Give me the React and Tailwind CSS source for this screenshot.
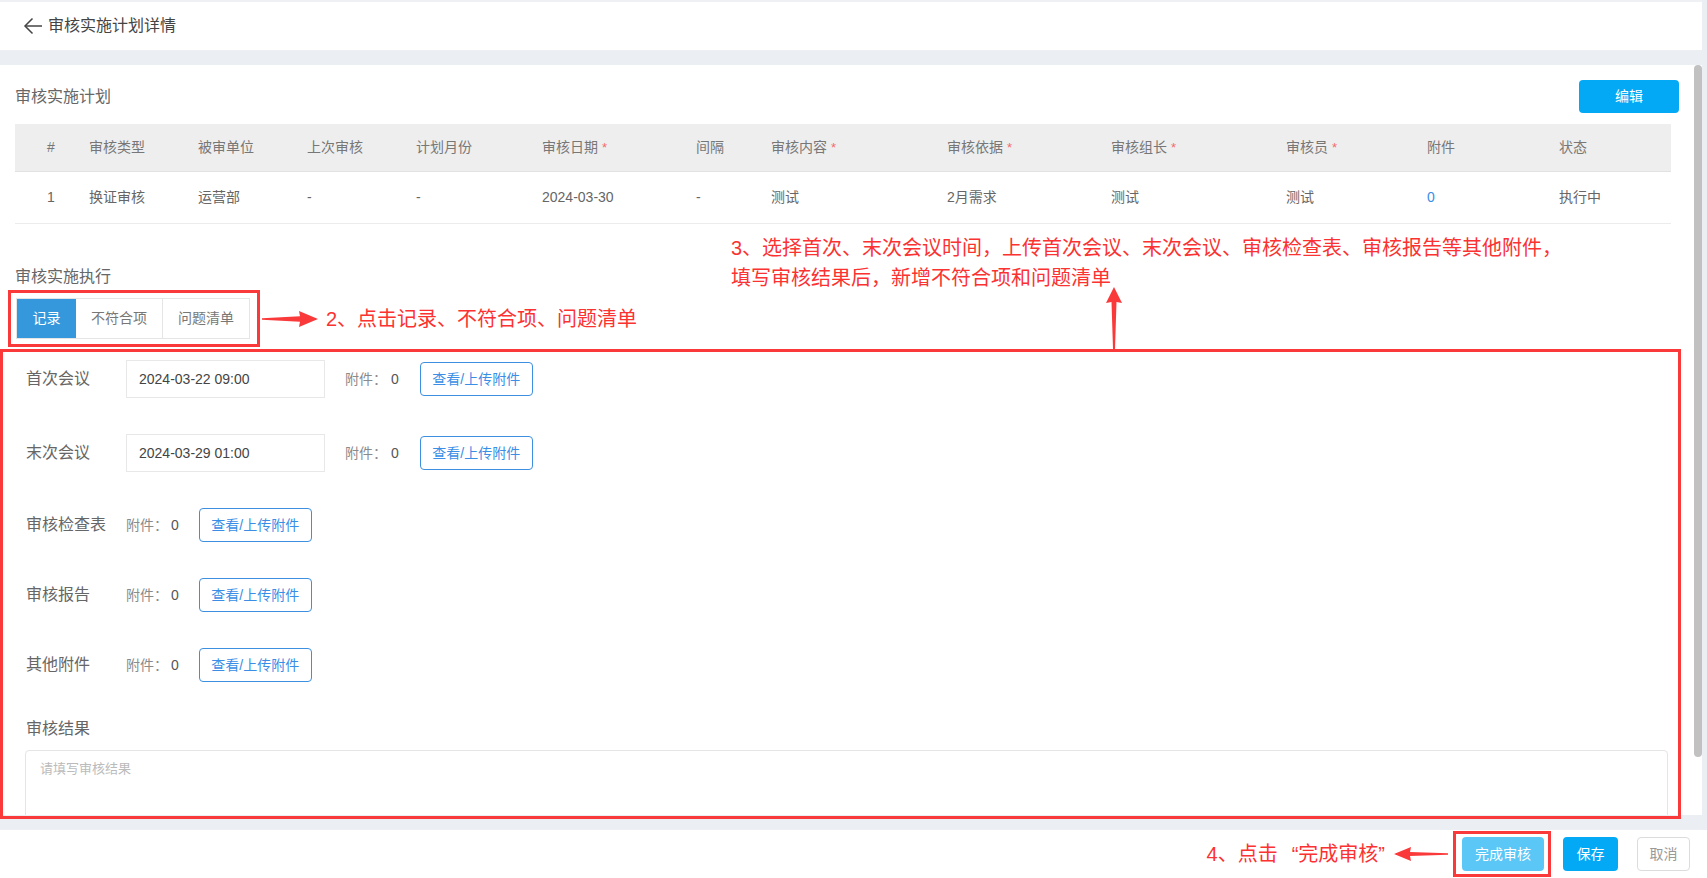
import React from "react";

const font = "font-['Liberation_Sans','Noto_Sans_CJK_SC',sans-serif]";

const gridCols =
  "grid grid-cols-[42px_109px_109px_109px_126px_154px_75px_176px_164px_175px_141px_132px_1fr] pl-[32px]";

const headers = [
  { t: "#" },
  { t: "审核类型" },
  { t: "被审单位" },
  { t: "上次审核" },
  { t: "计划月份" },
  { t: "审核日期", req: true },
  { t: "间隔" },
  { t: "审核内容", req: true },
  { t: "审核依据", req: true },
  { t: "审核组长", req: true },
  { t: "审核员", req: true },
  { t: "附件" },
  { t: "状态" },
];

const rowData = [
  "1",
  "换证审核",
  "运营部",
  "-",
  "-",
  "2024-03-30",
  "-",
  "测试",
  "2月需求",
  "测试",
  "测试",
  "0",
  "执行中",
];

// 查看/上传附件 按钮
const UploadBtn = () => (
  <button className="w-[113px] h-[34px] border border-[#3d8fe0] rounded-[4px] text-[14px] leading-none text-[#3a8ee6] bg-white">
    查看/上传附件
  </button>
);

const MeetingRow = ({ label, value, className }) => (
  <div className={"flex items-center h-[38px] " + className}>
    <span className="w-[100px] text-[16px] leading-[22px] text-[#666]">{label}</span>
    <div className="w-[199px] h-[38px] border border-[#e8e8e8] flex items-center pl-[12px] text-[14px] text-[#444]">
      {value}
    </div>
    <span className="ml-[20px] text-[14px] text-[#8a8a8a]">附件：</span>
    <span className="ml-[4px] text-[14px] text-[#555]">0</span>
    <div className="ml-[21px]">
      <UploadBtn />
    </div>
  </div>
);

const FileRow = ({ label, className }) => (
  <div className={"flex items-center h-[38px] " + className}>
    <span className="w-[100px] text-[16px] leading-[22px] text-[#666]">{label}</span>
    <span className="text-[14px] text-[#8a8a8a]">附件：</span>
    <span className="ml-[3px] text-[14px] text-[#555]">0</span>
    <div className="ml-[20px]">
      <UploadBtn />
    </div>
  </div>
);

const App = () => {
  return (
    <div className={"relative w-full h-[878px] overflow-hidden bg-[#ebeef2] " + font}>
      {/* 顶部标题栏 */}
      <div className="h-[50px] mr-[5px] bg-white border-t-[2px] border-[#eef0f3] flex items-center pl-[23px]">
        <svg width="20" height="18" viewBox="0 0 20 18" fill="none" stroke="#444" strokeWidth="1.5">
          <path d="M19 9H2" />
          <path d="M9.5 1.5L2 9l7.5 7.5" />
        </svg>
        <span className="ml-[5px] text-[16px] leading-[22px] text-[#444]">审核实施计划详情</span>
      </div>

      {/* 主体内容 */}
      <div className="mt-[15px] mr-[5px] h-[750px] bg-white flex">
        <div className="flex-1 overflow-hidden pt-[15px]">
          <div className="flex items-center justify-between pl-[15px] pr-[13px]">
            <span className="text-[16px] leading-[22px] text-[#666]">审核实施计划</span>
            <button className="w-[100px] h-[33px] rounded-[4px] bg-[#03a9f4] text-white text-[14px]">
              编辑
            </button>
          </div>

          {/* 计划表格 */}
          <div className="ml-[15px] w-[1656px] mt-[11px] text-[14px]">
            <div className={gridCols + " h-[48px] items-center bg-[#eeeeee] border-b border-[#e2e2e2] text-[#777]"}>
              {headers.map((h, i) => (
                <div key={i} className="flex items-center">
                  <span>{h.t}</span>
                  {h.req && <span className="ml-[4px] text-[#f56c6c] text-[13px]">*</span>}
                </div>
              ))}
            </div>
            <div className={gridCols + " h-[52px] items-center border-b border-[#ececec] text-[#666]"}>
              {rowData.map((v, i) => (
                <div key={i} className={i === 11 ? "text-[#3a8ee6]" : ""}>
                  {v}
                </div>
              ))}
            </div>
          </div>

          {/* 审核实施执行 */}
          <div className="pl-[15px] mt-[42px] text-[16px] leading-[22px] text-[#666]">审核实施执行</div>

          <div className="flex items-center mt-[2px] pl-[8px]">
            <div className="border-[3px] border-[#fa3a3a] pt-[5px] pb-[5px] pl-[5px] pr-[7px]">
              <div className="flex h-[41px] border border-[#e5e5e5] text-[14px]">
                <div className="w-[59px] bg-[#3598dc] text-white flex items-center justify-center">记录</div>
                <div className="w-[87px] border-r border-[#e5e5e5] text-[#777] flex items-center justify-center">
                  不符合项
                </div>
                <div className="w-[86px] text-[#777] flex items-center justify-center">问题清单</div>
              </div>
            </div>
            <svg width="56" height="16" viewBox="0 0 56 16" className="ml-[2px]">
              <polygon points="0,7.3 38,5.2 37,0 56,8 37,16 38,10.8 0,8.7" fill="#fa3a3a" />
            </svg>
            <span className="ml-[8px] text-[20px] leading-[28px] text-[#fb3232]">
              2、点击记录、不符合项、问题清单
            </span>
          </div>

          {/* 记录表单 */}
          <div className="pl-[26px]">
            <MeetingRow label="首次会议" value="2024-03-22 09:00" className="mt-[13px]" />
            <MeetingRow label="末次会议" value="2024-03-29 01:00" className="mt-[36px]" />
            <FileRow label="审核检查表" className="mt-[34px]" />
            <FileRow label="审核报告" className="mt-[32px]" />
            <FileRow label="其他附件" className="mt-[32px]" />
            <div className="mt-[34px] text-[16px] leading-[22px] text-[#666]">审核结果</div>
          </div>
          <div className="ml-[25px] mt-[10px] w-[1643px] h-[100px] border border-[#e5e5e5] rounded-[4px] pl-[14px] pt-[8px] text-[13px] text-[#bbb]">
            请填写审核结果
          </div>
        </div>

        {/* 滚动条 */}
        <div className="w-[10px] pl-[2px]">
          <div className="w-[8px] h-[692px] rounded-full bg-[#c1c1c1]" />
        </div>
      </div>

      {/* 底部操作栏 */}
      <div className="mt-[15px] h-[48px] bg-white flex items-center justify-end pr-[17px]">
        <span className="text-[20px] leading-[28px] text-[#fb3232]">
          4、点击<span className="ml-[14px]">“完成审核”</span>
        </span>
        <svg width="54" height="14" viewBox="0 0 54 14" className="ml-[9px]">
          <polygon points="0,7 17,0 16,5 54,6.3 54,7.7 16,9 17,14" fill="#fa3a3a" />
        </svg>
        <div className="ml-[5px] border-[3px] border-[#fa3a3a] h-[46px] w-[98px] flex items-center pl-[6px]">
          <button className="w-[82px] h-[34px] rounded-[4px] bg-[#5bc7f7] text-white text-[14px]">完成审核</button>
        </div>
        <button className="ml-[12px] w-[55px] h-[34px] rounded-[4px] bg-[#03a9f4] text-white text-[14px]">保存</button>
        <button className="ml-[19px] w-[53px] h-[34px] rounded-[4px] border border-[#dcdcdc] bg-white text-[#999] text-[14px]">
          取消
        </button>
      </div>

      {/* 标注：记录表单外框 */}
      <div className="absolute left-0 top-[349px] w-[1681px] h-[470px] border-[3px] border-[#fa3a3a] pointer-events-none" />

      {/* 标注：第3步说明 */}
      <div className="absolute left-[731px] top-[233px] text-[20px] leading-[30px] text-[#fb3232]">
        <div>3、选择首次、末次会议时间，上传首次会议、末次会议、审核检查表、审核报告等其他附件，</div>
        <div>填写审核结果后，新增不符合项和问题清单</div>
      </div>
      <svg width="16" height="62" viewBox="0 0 16 62" className="absolute left-[1106px] top-[287px]">
        <polygon points="8,0 16,16 10.5,15 9,62 7,62 5.5,15 0,16" fill="#fa3a3a" />
      </svg>
    </div>
  );
};

export default App;
